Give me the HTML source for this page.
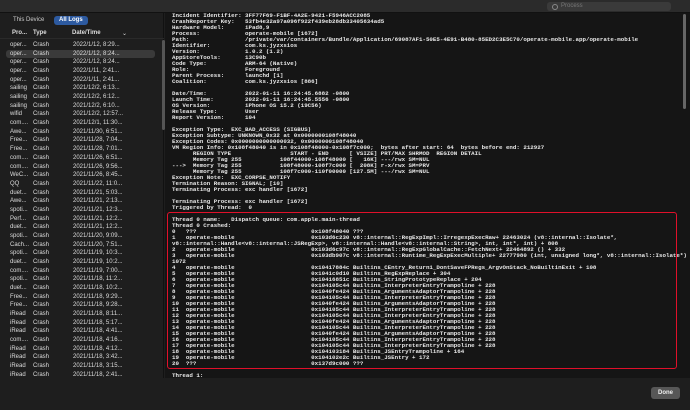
<!DOCTYPE html>
<html><head><meta charset="utf-8"><style>
*{margin:0;padding:0;box-sizing:border-box}
body{width:690px;height:410px;background:#1e1e1e;overflow:hidden;position:relative;font-family:"Liberation Sans",sans-serif;color:#ddd}
#top{position:absolute;left:0;top:0;width:690px;height:13px;background:#2b2b2b;border-bottom:1px solid #111}
#search{position:absolute;left:547px;top:2px;width:124px;height:9px;background:#3a3a3a;border-radius:3px;font-size:6px;color:#777;padding-left:14px;line-height:9px}
#search:before{content:"";position:absolute;left:5px;top:2px;width:4px;height:4px;border:1px solid #888;border-radius:50%}
#left{position:absolute;left:0;top:13px;width:164px;height:392px;background:#1e1e1e;border-right:1px solid #111}
.tab{position:absolute;top:3px;height:9px;font-size:6px;line-height:9px;padding:0 5px;border-radius:3px;color:#ccc}
#hdr{position:absolute;left:0;top:14px;width:164px;height:12px;font-size:6px;font-weight:bold;color:#ddd;border-bottom:1px solid #2a2a2a}
#hdr span{position:absolute;top:3px}
.row{position:absolute;left:6px;width:149px;height:8.7px;font-size:6px;line-height:8.7px;color:#ddd}
.row span{position:absolute}
.sel{background:#3a3a3a;border-radius:3px}
#lsb{position:absolute;left:162px;top:40px;width:3px;height:90px;background:#555;border-radius:2px}
#log{position:absolute;left:165px;top:13px;width:525px;height:365px;background:#151515;overflow:hidden}
pre{position:absolute;left:7px;top:0px;font-family:"Liberation Mono",monospace;font-weight:bold;font-size:5.8px;line-height:6px;color:#e8e8e8;white-space:pre}
#red{position:absolute;left:167px;top:212px;width:510px;height:157px;border:1.5px solid #e0102a;border-radius:3px}
#rsb{position:absolute;left:683px;top:14px;width:3px;height:95px;background:#666;border-radius:2px}
#bot{position:absolute;left:0;top:378px;width:690px;height:32px;background:#1e1e1e}
#done{position:absolute;left:651px;top:387px;width:29px;height:12px;background:#575757;border-radius:3px;font-size:6px;font-weight:bold;color:#eee;text-align:center;line-height:12px}
</style></head><body>
<div id="top"><div id="search">Process</div></div>
<div id="left">
<div class="tab" style="left:8px">This Device</div>
<div class="tab" style="left:54px;background:#2d5aa0;color:#fff;font-weight:bold">All Logs</div>
<div id="hdr"><span style="left:12px">Pro...</span><span style="left:33px">Type</span><span style="left:72px">Date/Time</span><span style="left:122px;font-weight:normal">⌄</span></div>
</div>
<div id="lsb"></div>
<div id="rows"></div>
<script>
var d=[["oper...","2022/1/12, 8:29..."],["oper...","2022/1/12, 8:24..."],["oper...","2022/1/12, 8:24..."],["oper...","2022/1/11, 2:41..."],["oper...","2022/1/11, 2:41..."],["sailing","2021/12/2, 6:13..."],["sailing","2021/12/2, 6:12..."],["sailing","2021/12/2, 6:10..."],["wifid","2021/12/2, 12:57..."],["com....","2021/12/1, 11:30..."],["Awe...","2021/11/30, 6:51..."],["Free...","2021/11/28, 7:04..."],["Free...","2021/11/28, 7:01..."],["com....","2021/11/26, 6:51..."],["com....","2021/11/26, 9:56..."],["WeC...","2021/11/26, 8:45..."],["QQ","2021/11/22, 11:0..."],["duet...","2021/11/21, 5:03..."],["Awe...","2021/11/21, 2:13..."],["spoti...","2021/11/21, 12:3..."],["Perf...","2021/11/21, 12:2..."],["duet...","2021/11/21, 12:2..."],["spoti...","2021/11/20, 9:09..."],["Cach...","2021/11/20, 7:51..."],["spoti...","2021/11/19, 10:3..."],["duet...","2021/11/19, 10:2..."],["com....","2021/11/19, 7:00..."],["spoti...","2021/11/18, 11:2..."],["duet...","2021/11/18, 10:2..."],["Free...","2021/11/18, 9:29..."],["Free...","2021/11/18, 9:28..."],["iRead","2021/11/18, 8:11..."],["iRead","2021/11/18, 5:17..."],["iRead","2021/11/18, 4:41..."],["com....","2021/11/18, 4:16..."],["iRead","2021/11/18, 4:12..."],["iRead","2021/11/18, 3:42..."],["iRead","2021/11/18, 3:15..."],["iRead","2021/11/18, 2:41..."]];
var h="";d.forEach(function(r,i){h+='<div class="row'+(i==1?' sel':'')+'" style="top:'+(41+i*8.68)+'px"><span style="left:4px">'+r[0]+'</span><span style="left:27px">Crash</span><span style="left:67px">'+r[1]+'</span></div>'});
document.getElementById("rows").innerHTML=h;
</script>
<div id="log"><pre>Incident Identifier: 3FF77F69-F1BF-4A2E-9421-F5946ACC2085
CrashReporter Key:   53fb4e32a97a096f922f439eb28db33405634ad5
Hardware Model:      iPad8,9
Process:             operate-mobile [1672]
Path:                /private/var/containers/Bundle/Application/69087AF1-50E5-4E91-B480-85ED2C3E5C70/operate-mobile.app/operate-mobile
Identifier:          com.ks.jyzxsios
Version:             1.0.2 (1.2)
AppStoreTools:       13C90b
Code Type:           ARM-64 (Native)
Role:                Foreground
Parent Process:      launchd [1]
Coalition:           com.ks.jyzxsios [886]

Date/Time:           2022-01-11 16:24:45.6882 -0800
Launch Time:         2022-01-11 16:24:45.5556 -0800
OS Version:          iPhone OS 15.2 (19C56)
Release Type:        User
Report Version:      104

Exception Type:  EXC_BAD_ACCESS (SIGBUS)
Exception Subtype: UNKNOWN_0x32 at 0x0000000108f48040
Exception Codes: 0x0000000000000032, 0x0000000108f48040
VM Region Info: 0x108f48040 is in 0x108f48000-0x108f7c000;  bytes after start: 64  bytes before end: 212927
      REGION TYPE                 START - END      [ VSIZE] PRT/MAX SHRMOD  REGION DETAIL
      Memory Tag 255           108f44000-108f48000 [   16K] ---/rwx SM=NUL
--->  Memory Tag 255           108f48000-108f7c000 [  208K] r-x/rwx SM=PRV
      Memory Tag 255           108f7c000-110f00000 [127.5M] ---/rwx SM=NUL
Exception Note:  EXC_CORPSE_NOTIFY
Termination Reason: SIGNAL; [10]
Terminating Process: exc handler [1672]

Terminating Process: exc handler [1672]
Triggered by Thread:  0

Thread 0 name:   Dispatch queue: com.apple.main-thread
Thread 0 Crashed:
0   ???                                 0x108f48040 ???
1   operate-mobile                      0x103d6c230 v8::internal::RegExpImpl::IrregexpExecRaw+ 22463024 (v8::internal::Isolate*,
v8::internal::Handle&lt;v8::internal::JSRegExp&gt;, v8::internal::Handle&lt;v8::internal::String&gt;, int, int*, int) + 808
2   operate-mobile                      0x103d6c97c v8::internal::RegExpGlobalCache::FetchNext+ 22464892 () + 332
3   operate-mobile                      0x103db907c v8::internal::Runtime_RegExpExecMultiple+ 22777980 (int, unsigned long*, v8::internal::Isolate*) +
1072
4   operate-mobile                      0x10417884c Builtins_CEntry_Return1_DontSaveFPRegs_ArgvOnStack_NoBuiltinExit + 108
5   operate-mobile                      0x1041c0d10 Builtins_RegExpReplace + 304
6   operate-mobile                      0x10416851c Builtins_StringPrototypeReplace + 204
7   operate-mobile                      0x104105c44 Builtins_InterpreterEntryTrampoline + 228
8   operate-mobile                      0x1040fe424 Builtins_ArgumentsAdaptorTrampoline + 228
9   operate-mobile                      0x104105c44 Builtins_InterpreterEntryTrampoline + 228
10  operate-mobile                      0x1040fe424 Builtins_ArgumentsAdaptorTrampoline + 228
11  operate-mobile                      0x104105c44 Builtins_InterpreterEntryTrampoline + 228
12  operate-mobile                      0x104105c44 Builtins_InterpreterEntryTrampoline + 228
13  operate-mobile                      0x1040fe424 Builtins_ArgumentsAdaptorTrampoline + 228
14  operate-mobile                      0x104105c44 Builtins_InterpreterEntryTrampoline + 228
15  operate-mobile                      0x1040fe424 Builtins_ArgumentsAdaptorTrampoline + 228
16  operate-mobile                      0x104105c44 Builtins_InterpreterEntryTrampoline + 228
17  operate-mobile                      0x104105c44 Builtins_InterpreterEntryTrampoline + 228
18  operate-mobile                      0x104103184 Builtins_JSEntryTrampoline + 164
19  operate-mobile                      0x104102e2c Builtins_JSEntry + 172
20  ???                                 0x137d9c000 ???

Thread 1:
</pre></div>
<div id="red"></div>
<div id="rsb"></div>
<div id="bot"></div>
<div id="done">Done</div>
</body></html>
